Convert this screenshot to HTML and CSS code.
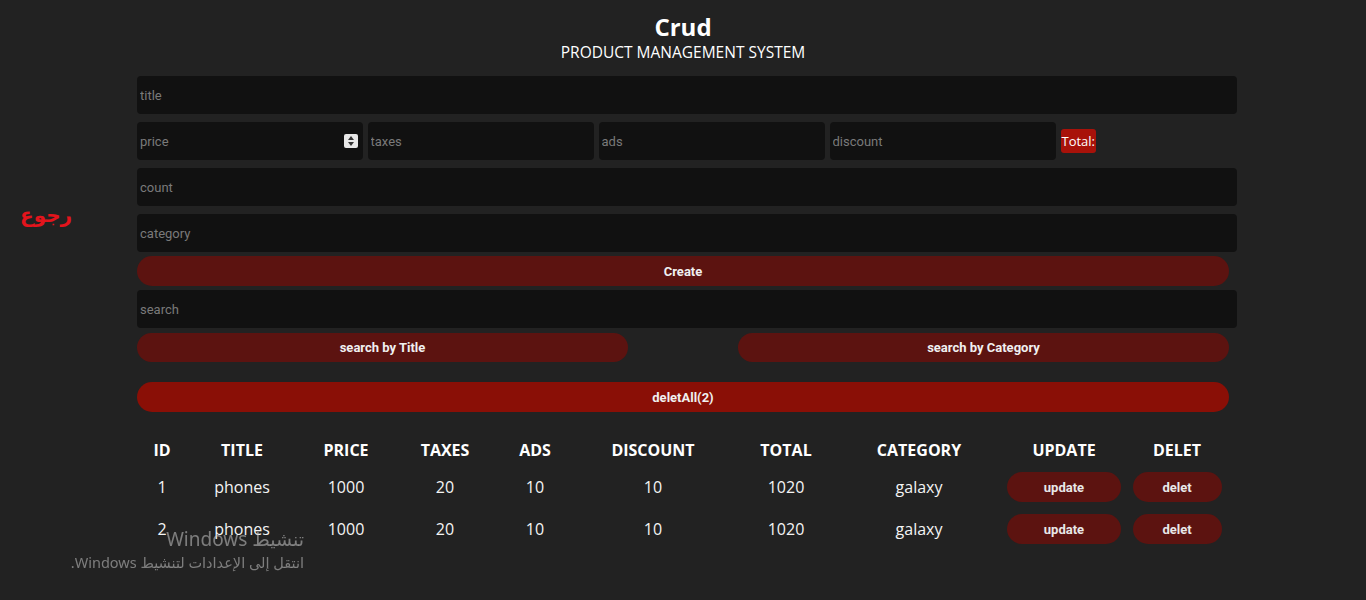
FILE: index.html
```html
<!DOCTYPE html>
<html lang="en">
<head>
<meta charset="utf-8">
<title>Crud</title>
<link rel="stylesheet" href="styles.css">
</head>
<body>
<a class="back" href="#">رجوع</a>
<div class="crud">
  <header class="head">
    <h1>Crud</h1>
    <p>PRODUCT MANAGEMENT SYSTEM</p>
  </header>
  <div class="inputs">
    <input class="field" type="text" placeholder="title">
    <div class="price-row">
      <div class="price-wrap">
        <input class="field small" type="text" placeholder="price">
        <span class="spin"><i class="up"></i><i class="down"></i></span>
      </div>
      <input class="field small" type="text" placeholder="taxes">
      <input class="field small" type="text" placeholder="ads">
      <input class="field small" type="text" placeholder="discount">
      <small class="total">Total:</small>
    </div>
    <input class="field" type="text" placeholder="count">
    <input class="field" type="text" placeholder="category">
    <button class="btn create">Create</button>
  </div>
  <div class="search-block">
    <input class="field" type="text" placeholder="search">
    <div class="btn-search">
      <button class="btn half">search by Title</button>
      <button class="btn half">search by Category</button>
    </div>
  </div>
  <div class="delete-all">
    <button class="btn bright">deletAll(2)</button>
  </div>
  <table class="outputs">
    <colgroup>
      <col style="width:50px"><col style="width:110px"><col style="width:98px"><col style="width:100px"><col style="width:80px"><col style="width:156px"><col style="width:110px"><col style="width:156px"><col style="width:134px"><col style="width:92px">
    </colgroup>
    <thead>
      <tr><th>ID</th><th>title</th><th>price</th><th>taxes</th><th>ads</th><th>discount</th><th>total</th><th>category</th><th>update</th><th>delet</th></tr>
    </thead>
    <tbody>
      <tr><td>1</td><td>phones</td><td>1000</td><td>20</td><td>10</td><td>10</td><td>1020</td><td>galaxy</td><td><button class="row-btn upd">update</button></td><td><button class="row-btn del">delet</button></td></tr>
      <tr><td>2</td><td>phones</td><td>1000</td><td>20</td><td>10</td><td>10</td><td>1020</td><td>galaxy</td><td><button class="row-btn upd">update</button></td><td><button class="row-btn del">delet</button></td></tr>
    </tbody>
  </table>
</div>
<div class="watermark">
  <div class="wm1">تنشيط Windows</div>
  <div class="wm2">انتقل إلى الإعدادات لتنشيط Windows.</div>
</div>
</body>
</html>
```
FILE: styles.css
```css
* { box-sizing: border-box; }
html, body { margin: 0; padding: 0; }
body {
  background: #222222;
  color: #ffffff;
  font-family: "Open Sans", "Noto Sans", sans-serif;
  height: 600px;
  overflow: hidden;
}
.back {
  position: absolute;
  left: 20px;
  top: 203px;
  color: #e3141c;
  font-family: "DejaVu Sans", sans-serif;
  font-weight: bold;
  font-size: 20px;
  text-decoration: none;
}
.crud {
  width: 1100px;
  margin-left: 137px;
}
.head {
  text-align: center;
  padding-top: 12px;
  margin-left: -8px;
  margin-bottom: 14px;
}
.head h1 {
  margin: 0;
  font-size: 24px;
  line-height: 30px;
  font-weight: 700;
}
.head p {
  margin: 0;
  font-size: 15.5px;
  line-height: 20px;
}
.inputs {
  display: flex;
  flex-direction: column;
  gap: 8px;
}
.field {
  display: block;
  width: 100%;
  height: 38px;
  margin: 0;
  background: #111111;
  border: none;
  border-radius: 4px;
  padding: 0 3px;
  color: #fff;
  outline: none;
  font-family: Roboto, "Liberation Sans", sans-serif;
  font-size: 13px;
}
.field::placeholder { color: #7a7a7a; }
.price-row {
  display: flex;
  align-items: center;
  gap: 4.5px;
}
.small { width: 226.5px; flex: none; }
.price-wrap { position: relative; width: 226px; flex: none; }
.price-wrap .field { width: 100%; }
.spin {
  position: absolute;
  right: 5px;
  top: 12px;
  width: 14px;
  height: 14px;
  background: #e8e8e8;
  border-radius: 2px;
  display: flex;
  flex-direction: column;
  align-items: center;
  justify-content: center;
  gap: 2px;
}
.spin i { display: block; width: 0; height: 0; border-left: 3.5px solid transparent; border-right: 3.5px solid transparent; }
.spin .up { border-bottom: 4px solid #333; }
.spin .down { border-top: 4px solid #333; }
.total {
  background: #a8120a;
  color: #fff;
  border-radius: 3px;
  height: 24px;
  line-height: 24px;
  padding: 0 1px;
  font-size: 13px;
  font-family: "Open Sans", sans-serif;
}
.btn {
  display: block;
  width: 1092px;
  height: 30px;
  margin: 0;
  border: none;
  border-radius: 15px;
  background: #5c1310;
  color: #f0f0f0;
  font-family: Roboto, "Liberation Sans", sans-serif;
  font-weight: 700;
  font-size: 13px;
  cursor: pointer;
}
.create { margin-top: -4px; }
.search-block { margin-top: 4px; }
.btn-search {
  display: flex;
  justify-content: space-between;
  width: 1092px;
  margin-top: 5px;
}
.btn-search .half { width: 491px; height: 29px; }
.delete-all { margin-top: 20px; }
.bright { background: #8a0f06; }
.outputs {
  border-collapse: collapse;
  margin-top: 22px;
  table-layout: fixed;
  width: 1086px;
}
.outputs th {
  height: 32px;
  font-size: 16px;
  font-weight: 700;
  text-transform: uppercase;
  text-align: center;
  padding: 0;
}
.outputs td {
  height: 42px;
  font-size: 16px;
  text-align: center;
  padding: 0;
  color: #f4f4f4;
}
.row-btn {
  border: none;
  background: #5c1310;
  color: #e8e8e8;
  height: 30px;
  border-radius: 15px;
  font-family: Roboto, "Liberation Sans", sans-serif;
  font-weight: 700;
  font-size: 13px;
  cursor: pointer;
  display: block;
  margin: 0 auto;
}
.upd { width: 114px; }
.del { width: 89px; }
.watermark {
  position: fixed;
  left: 0;
  top: 526px;
  width: 304px;
  text-align: right;
  color: rgba(200, 200, 200, 0.55);
  direction: rtl;
  font-family: "Noto Sans", "DejaVu Sans", sans-serif;
  pointer-events: none;
}
.wm1 { font-size: 19px; line-height: 26px; }
.wm2 { font-size: 14.5px; line-height: 20px; }
```
